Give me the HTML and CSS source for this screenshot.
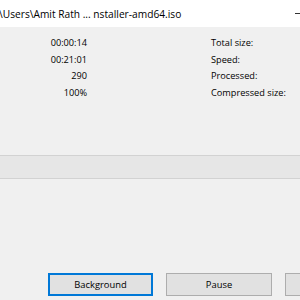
FILE: index.html
```html
<!DOCTYPE html>
<html lang="en">
<head>
  <meta charset="UTF-8">
  <title>Extracting</title>
  <link rel="stylesheet" href="styles.css">
</head>
<body>
  <div class="dialog">
    <div class="titlebar">
      <span class="title">\Users\Amit Rath ... nstaller-amd64.iso</span>
      <span class="minimize"></span>
    </div>
    <div class="stats">
      <div class="value">00:00:14</div>
      <div class="label">Total size:</div>
      <div class="value">00:21:01</div>
      <div class="label">Speed:</div>
      <div class="value">290</div>
      <div class="label">Processed:</div>
      <div class="value">100%</div>
      <div class="label">Compressed size:</div>
    </div>
    <div class="progress"></div>
    <div class="buttons">
      <button class="btn default">Background</button>
      <button class="btn">Pause</button>
      <button class="btn" aria-label="Cancel"></button>
    </div>
  </div>
</body>
</html>
```

FILE: styles.css
```css
body {
  margin: 0;
  padding: 0;
  background: #f0f0f0;
  font-family: "Open Sans", "Noto Sans", sans-serif;
  color: #000;
  overflow: hidden;
}
.dialog {
  width: 300px;
}
.titlebar {
  height: 27px;
  background: #ffffff;
  display: flex;
  align-items: center;
  justify-content: space-between;
  font-size: 10.2px;
  margin-left: -1px;
}
.minimize {
  width: 10px;
  height: 1px;
  background: #333;
  margin-right: -5px;
}
.stats {
  display: grid;
  grid-template-columns: 87px 124px 1fr;
  grid-auto-rows: 16.6px;
  padding-top: 8px;
  font-size: 9.2px;
  line-height: 16.6px;
}
.stats .value {
  text-align: right;
}
.stats .label {
  grid-column: 3;
}
.progress {
  margin-top: 54px;
  height: 22px;
  background: #e6e6e6;
  border-top: 1px solid #d2d2d2;
  border-bottom: 1px solid #d2d2d2;
}
.buttons {
  margin-top: 94px;
  display: flex;
  gap: 13px;
  padding-left: 48px;
}
.btn {
  flex: none;
  width: 106px;
  height: 23px;
  margin: 0;
  padding: 0;
  background: #e1e1e1;
  border: 1px solid #adadad;
  font-family: inherit;
  font-size: 9.4px;
  color: #000;
}
.btn.default {
  width: 105px;
  border: 2px solid #0078d7;
}
```
